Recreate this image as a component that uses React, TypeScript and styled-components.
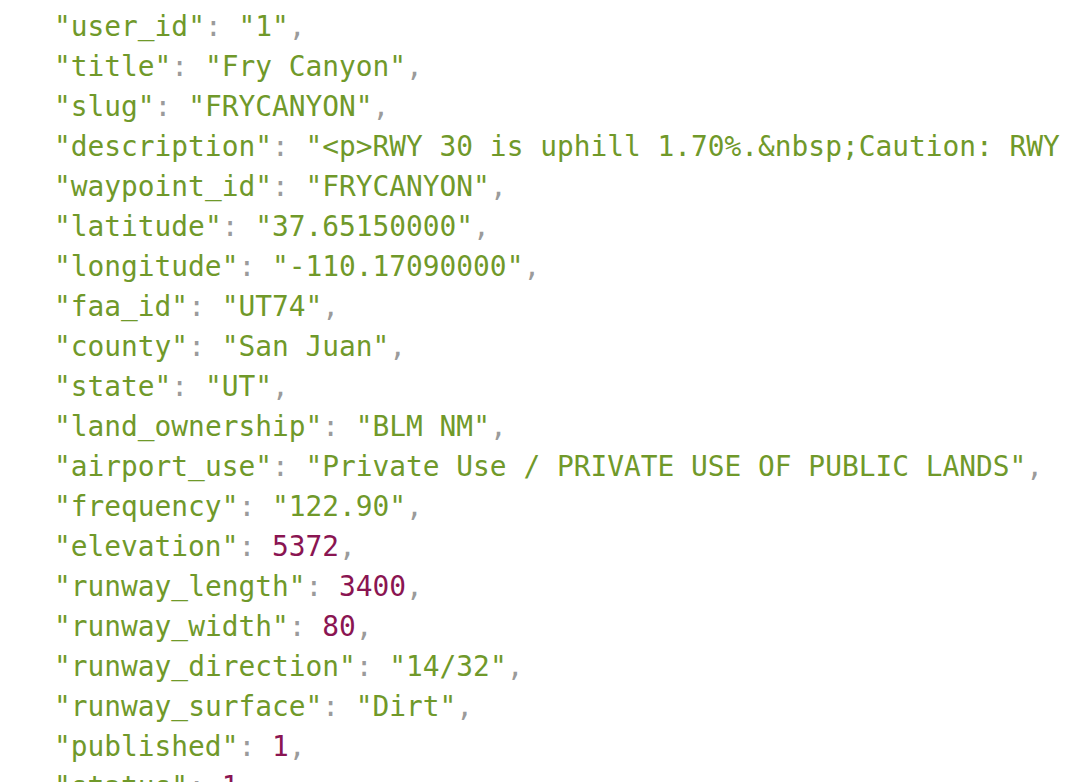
import React from "react";
import styled, { createGlobalStyle } from "styled-components";

const Global = createGlobalStyle`
  html, body { margin: 0; padding: 0; background: #ffffff; }
  body { overflow: hidden; }
`;

const Viewport = styled.div`
  width: 100vw;
  height: 100vh;
  overflow: hidden;
  background: #ffffff;
`;

const Code = styled.pre`
  margin: -33px 0 0 0;
  padding: 0 0 0 54px;
  font-family: "DejaVu Sans Mono", "Liberation Mono", monospace;
  font-size: 27.85px;
  line-height: 40px;
  white-space: pre;
  color: #9b9b9b;
`;

const Line = styled.div`
  height: 40px;
  white-space: pre;
`;

const Str = styled.span`
  color: #70992a;
`;

const Under = styled.span`
  line-height: 0;
  vertical-align: 2px;
`;

const Num = styled.span`
  color: #8a1552;
`;

const Punct = styled.span`
  color: #9b9b9b;
`;

type Entry = { key: string; value: string | number };

const entries: Entry[] = [
  { key: "uuid", value: "8F3A2C41-9D7E-4B65-A0C3-E1F27D6B4C" },
  { key: "user_id", value: "1" },
  { key: "title", value: "Fry Canyon" },
  { key: "slug", value: "FRYCANYON" },
  {
    key: "description",
    value:
      "<p>RWY 30 is uphill 1.70%.&nbsp;Caution: RWY 12 has a dip near the threshold.</p>",
  },
  { key: "waypoint_id", value: "FRYCANYON" },
  { key: "latitude", value: "37.65150000" },
  { key: "longitude", value: "-110.17090000" },
  { key: "faa_id", value: "UT74" },
  { key: "county", value: "San Juan" },
  { key: "state", value: "UT" },
  { key: "land_ownership", value: "BLM NM" },
  { key: "airport_use", value: "Private Use / PRIVATE USE OF PUBLIC LANDS" },
  { key: "frequency", value: "122.90" },
  { key: "elevation", value: 5372 },
  { key: "runway_length", value: 3400 },
  { key: "runway_width", value: 80 },
  { key: "runway_direction", value: "14/32" },
  { key: "runway_surface", value: "Dirt" },
  { key: "published", value: 1 },
  { key: "status", value: 1 },
];

function KeyText({ text }: { text: string }) {
  const parts = text.split("_");
  return (
    <>
      {parts.map((p, i) => (
        <React.Fragment key={i}>
          {i > 0 && <Under>_</Under>}
          {p}
        </React.Fragment>
      ))}
    </>
  );
}

export default function App() {
  return (
    <Viewport>
      <Global />
      <Code>
        {entries.map((e) => (
          <Line key={e.key}>
            <Str>
              "<KeyText text={e.key} />"
            </Str>
            <Punct>: </Punct>
            {typeof e.value === "number" ? (
              <Num>{e.value}</Num>
            ) : (
              <Str>"{e.value}"</Str>
            )}
            <Punct>,</Punct>
          </Line>
        ))}
      </Code>
    </Viewport>
  );
}
